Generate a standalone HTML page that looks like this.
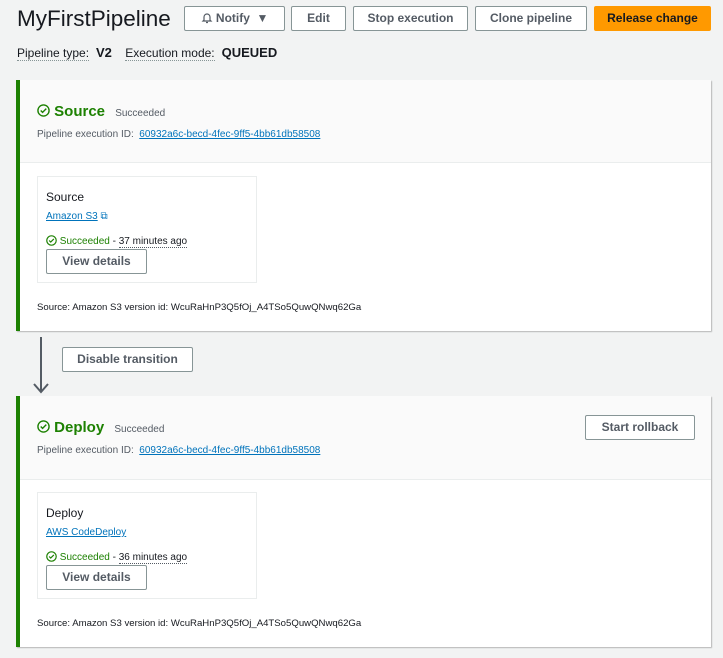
<!DOCTYPE html>
<html><head><meta charset="utf-8"><style>
*{box-sizing:border-box;margin:0;padding:0}
body{width:723px;height:658px;background:#f2f3f3;font-family:"Liberation Sans",sans-serif;color:#16191f;position:relative;overflow:hidden}
.a{position:absolute}
.btn{position:absolute;background:#fff;border:1px solid #879596;border-radius:2px;font-weight:bold;font-size:12px;color:#545b64;text-align:center;line-height:23px;height:25px}
.panel{position:absolute;left:16px;width:695px;background:#fff;border-left:4px solid #1d8102;box-shadow:1px 1px 1px rgba(0,0,0,.25)}
.hdr{position:absolute;left:0;top:0;right:0;background:#fafafa;border-bottom:1px solid #eaeded}
.title{position:absolute;left:17px;font-size:15px;font-weight:bold;color:#1d8102}
.sm{font-size:10px;color:#545b64}
a,.lnk{color:#0073bb;text-decoration:underline}
.card{position:absolute;left:17px;width:220px;height:107px;border:1px solid #eaeded;background:#fff}
.ok{color:#1d8102;font-size:10px}
</style></head><body>
<div class="a" style="left:17px;top:6px;font-size:22.5px;color:#16191f">MyFirstPipeline</div>
<div class="btn" style="left:184px;top:6px;width:101px">
<svg width="12" height="12" viewBox="0 0 12 12" style="vertical-align:-2px"><path d="M3 8V5a3 3 0 0 1 6 0v3l1 1H2z M5 10.5h2" fill="none" stroke="#545b64" stroke-width="1.2"/></svg> Notify&nbsp;&nbsp;▼</div>
<div class="btn" style="left:291px;top:6px;width:55px">Edit</div>
<div class="btn" style="left:353px;top:6px;width:115px">Stop execution</div>
<div class="btn" style="left:475px;top:6px;width:112px">Clone pipeline</div>
<div class="btn" style="left:594px;top:6px;width:117px;background:#ff9900;border-color:#ff9900;color:#16191f">Release change</div>
<div class="a" style="left:17px;top:45px;font-size:12px"><span style="border-bottom:1px dotted #879596">Pipeline type:</span> <b style="font-size:13px">&nbsp;V2</b>&nbsp;&nbsp;&nbsp;&nbsp;<span style="border-bottom:1px dotted #879596">Execution mode:</span> <b style="font-size:13px">&nbsp;QUEUED</b></div>

<div class="panel" style="top:80px;height:251px">
 <div class="hdr" style="height:83px"></div>
 <div class="title" style="top:23px"><svg width="13" height="13" viewBox="0 0 14 14" style="vertical-align:-1px"><circle cx="7" cy="7" r="6" fill="none" stroke="#1d8102" stroke-width="1.5"/><path d="M4 7l2 2 4-4" fill="none" stroke="#1d8102" stroke-width="1.5"/></svg> Source <span class="sm" style="font-weight:normal;margin-left:6px">Succeeded</span></div>
 <div class="a sm" style="left:17px;top:49px">Pipeline execution ID:&nbsp; <span class="lnk">60932a6c-becd-4fec-9ff5-4bb61db58508</span></div>
 <div class="card" style="top:96px">
  <div class="a" style="left:8px;top:13px;font-size:12px">Source</div>
  <div class="a" style="left:8px;top:34px;font-size:10px"><span class="lnk">Amazon S3</span> <span style="color:#0073bb">⧉</span></div>
  <div class="a" style="left:8px;top:58px;font-size:10px"><span class="ok"><svg width="11" height="11" viewBox="0 0 14 14" style="vertical-align:-2px"><circle cx="7" cy="7" r="6" fill="none" stroke="#1d8102" stroke-width="1.5"/><path d="M4 7l2 2 4-4" fill="none" stroke="#1d8102" stroke-width="1.5"/></svg> Succeeded</span> - <span style="border-bottom:1px dotted #545b64">37 minutes ago</span></div>
  <div class="btn" style="left:8px;top:72px;width:101px">View details</div>
 </div>
 <div class="a sm" style="left:17px;top:222px;color:#16191f;font-size:9.6px">Source: Amazon S3 version id: WcuRaHnP3Q5fOj_A4TSo5QuwQNwq62Ga</div>
</div>

<div class="a" style="left:40px;top:337px;width:2px;height:54px;background:#545b64"></div>
<svg class="a" style="left:33px;top:382px" width="16" height="12"><path d="M1 2l7 8 7-8" fill="none" stroke="#545b64" stroke-width="2"/></svg>
<div class="btn" style="left:62px;top:347px;width:131px">Disable transition</div>

<div class="panel" style="top:396px;height:251px">
 <div class="hdr" style="height:84px"></div>
 <div class="title" style="top:23px"><svg width="13" height="13" viewBox="0 0 14 14" style="vertical-align:-1px"><circle cx="7" cy="7" r="6" fill="none" stroke="#1d8102" stroke-width="1.5"/><path d="M4 7l2 2 4-4" fill="none" stroke="#1d8102" stroke-width="1.5"/></svg> Deploy <span class="sm" style="font-weight:normal;margin-left:6px">Succeeded</span></div>
 <div class="btn" style="left:565px;top:19px;width:110px">Start rollback</div>
 <div class="a sm" style="left:17px;top:49px">Pipeline execution ID:&nbsp; <span class="lnk">60932a6c-becd-4fec-9ff5-4bb61db58508</span></div>
 <div class="card" style="top:96px">
  <div class="a" style="left:8px;top:13px;font-size:12px">Deploy</div>
  <div class="a" style="left:8px;top:34px;font-size:10px"><span class="lnk">AWS CodeDeploy</span></div>
  <div class="a" style="left:8px;top:58px;font-size:10px"><span class="ok"><svg width="11" height="11" viewBox="0 0 14 14" style="vertical-align:-2px"><circle cx="7" cy="7" r="6" fill="none" stroke="#1d8102" stroke-width="1.5"/><path d="M4 7l2 2 4-4" fill="none" stroke="#1d8102" stroke-width="1.5"/></svg> Succeeded</span> - <span style="border-bottom:1px dotted #545b64">36 minutes ago</span></div>
  <div class="btn" style="left:8px;top:72px;width:101px">View details</div>
 </div>
 <div class="a sm" style="left:17px;top:222px;color:#16191f;font-size:9.6px">Source: Amazon S3 version id: WcuRaHnP3Q5fOj_A4TSo5QuwQNwq62Ga</div>
</div>
</body></html>
